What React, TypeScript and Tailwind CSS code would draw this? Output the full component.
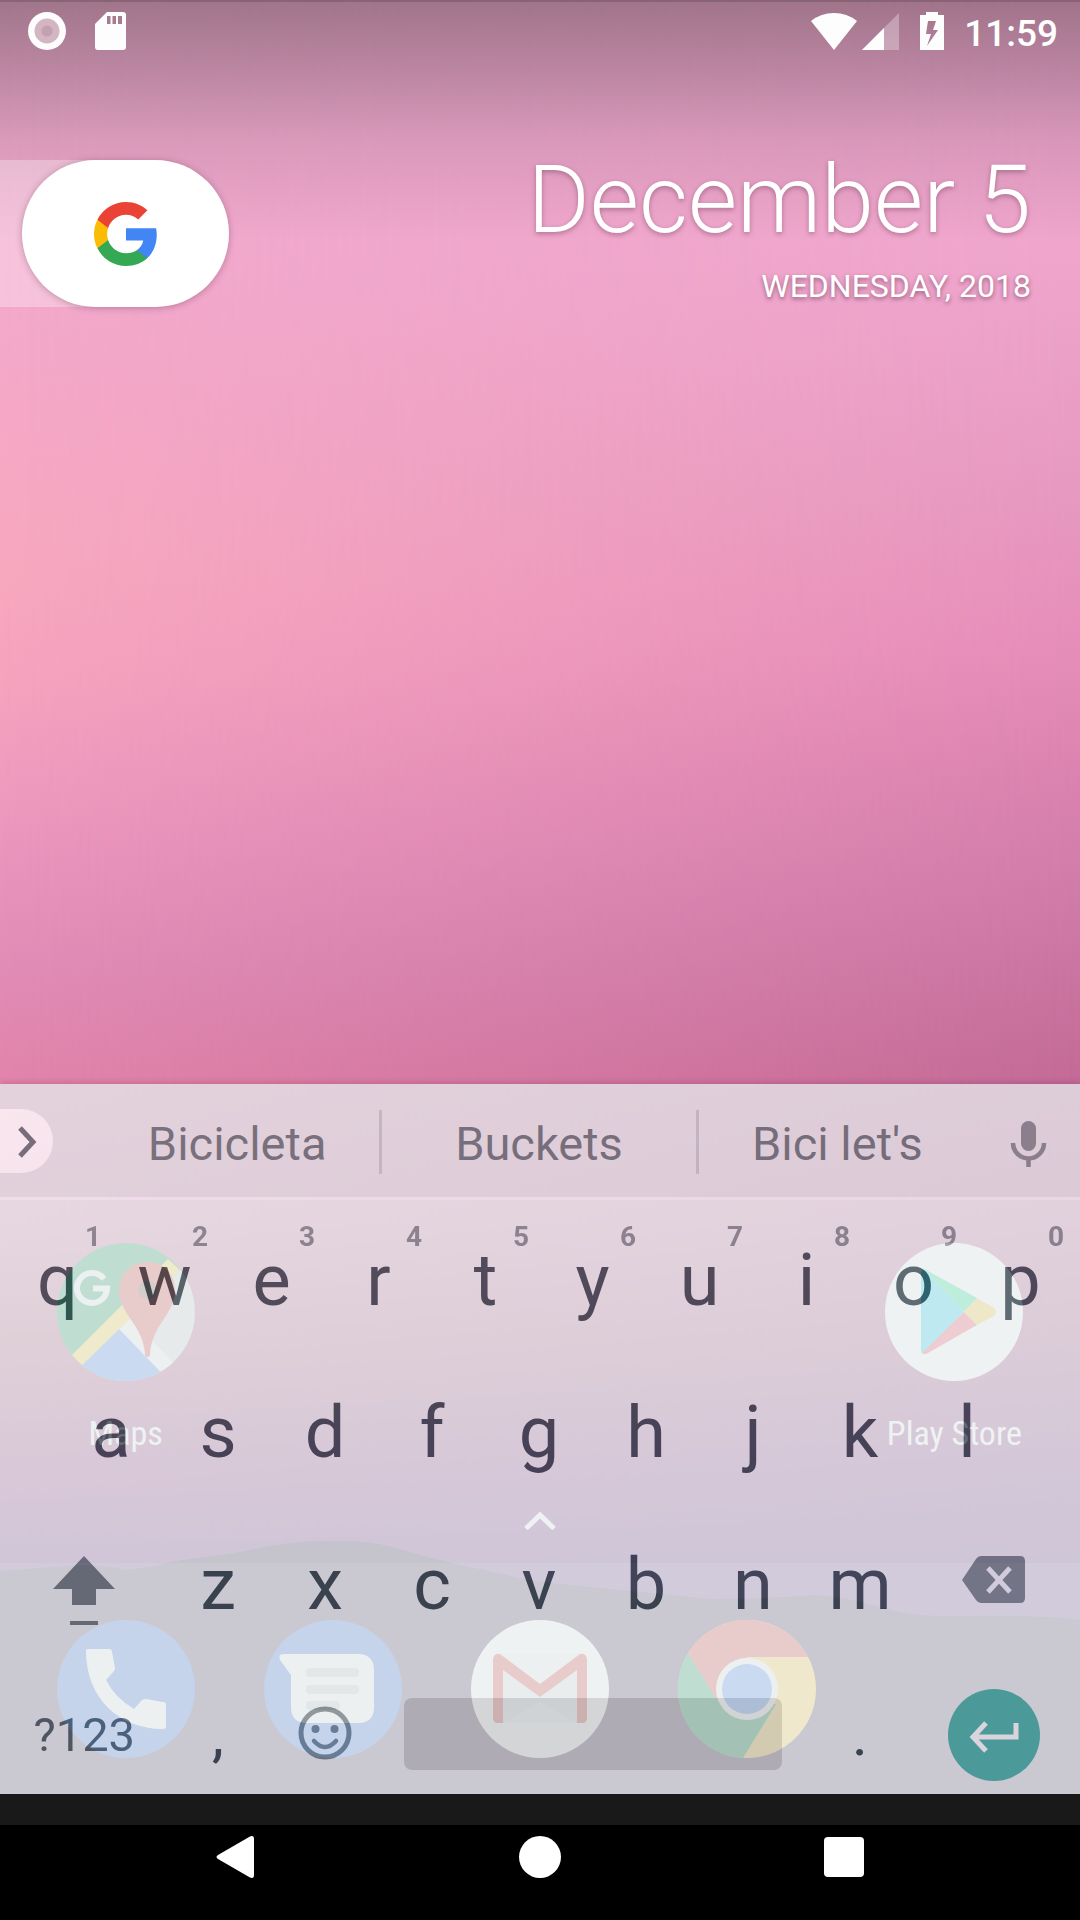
import type { ReactNode } from "react";

const ROW_ONE = ["q", "w", "e", "r", "t", "y", "u", "i", "o", "p"];
const ROW_TWO = ["a", "s", "d", "f", "g", "h", "j", "k", "l"];
const ROW_THREE = ["z", "x", "c", "v", "b", "n", "m"];

function Wallpaper() {
  return (
    <div aria-hidden="true" className="absolute inset-0">
      <div className="absolute inset-0 bg-[linear-gradient(180deg,#f0aace_0%,#f2a9cc_16%,#f5a8c6_22%,#f7a8bf_32%,#f5a3be_38%,#ec97be_46%,#e18cb6_54%,#e284ab_60.4%,#d278a0_68%,#af5578_75%,#8c2d78_83%,#5a2378_88%,#4b2864_100%)]" />
      <div className="absolute inset-0 bg-[linear-gradient(180deg,#efa6cc_0%,#efa5cc_14%,#eba0c8_20%,#e698c0_28%,#e68dba_36%,#dd84b1_42%,#cf7ba8_50%,#c36a96_60.4%,#b95a8c_68%,#9a4078_75%,#6e2878_83%,#5a2378_88%,#4b2864_100%)] [mask-image:linear-gradient(90deg,transparent,black)]" />
      <div className="absolute inset-x-0 top-0 h-[240px] bg-[linear-gradient(180deg,rgba(50,45,45,0.42),rgba(55,48,55,0.29)_28%,rgba(60,50,60,0.13)_58%,transparent)]" />
      <div className="absolute inset-x-0 top-0 h-[2px] bg-black/15" />
      <svg className="absolute inset-x-0 bottom-0 h-[260px] w-full" viewBox="0 0 1080 260" preserveAspectRatio="none">
        <path
          fill="#2d143c"
          d="M0 37 L80 31 Q105 31 125 36 Q150 34 170 28 L240 18 Q290 7 320 7 H355 Q380 8 420 21 Q470 34 500 39 Q530 48 560 50 Q650 59 710 65 Q770 65 815 61 Q850 64 880 73 Q910 82 940 82 H1000 Q1050 82 1080 86 V260 H0 Z"
        />
      </svg>
    </div>
  );
}

function StatusBar() {
  return (
    <header className="relative flex h-[66px] items-center justify-between pr-[22px] pl-[27px] text-white">
      <div className="flex items-center gap-7 pb-1">
        <svg className="h-10 w-10" viewBox="0 0 40 40">
          <circle cx="20" cy="20" r="19" fill="#fdfdfd" />
          <circle cx="20" cy="20" r="12.5" fill="#d4b6c3" />
          <circle cx="20" cy="20" r="5.6" fill="#c4a0b0" />
        </svg>
        <svg className="h-10 w-8" viewBox="0 0 32 40">
          <path fill="#fdfdfd" d="M12 1H28Q31 1 31 4V36Q31 39 28 39H3Q0 39 0 36V13Z" />
          <path fill="#a97b8f" d="M12 5H15.500V13H12ZM17.500 5H21V13H17.500ZM23 5H27V13H23Z" />
        </svg>
      </div>
      <div className="flex items-center">
        <div className="flex items-center pb-1">
          <svg className="h-[38px] w-12" viewBox="0 0 48 38">
            <path fill="#fdfdfd" d="M24 38L1 9Q11 1 24 1T47 9Z" />
          </svg>
          <svg className="ml-1 h-[38px] w-[38px]" viewBox="0 0 38 38">
            <path fill="#fff" fillOpacity=".3" d="M37 1V38H0Z" />
            <path fill="#fdfdfd" d="M22 16V38H0Z" />
          </svg>
          <svg className="ml-5 h-[38px] w-6" viewBox="0 0 24 38">
            <path fill="#fdfdfd" fillRule="evenodd" d="M6 0H18V3H24V38H0V3H6ZM8 9L6 22H11L7 34L18 18H13L16 9Z" />
          </svg>
        </div>
        <time className="ml-5 pt-[2px] text-[37px] leading-10 font-medium">11:59</time>
      </div>
    </header>
  );
}

function GoogleMark() {
  return (
    <svg className="h-16 w-16" viewBox="0 0 18 18">
      <path fill="#4285F4" d="M17.64 9.2c0-.637-.057-1.251-.164-1.84H9v3.481h4.844c-.209 1.125-.843 2.078-1.796 2.717v2.258h2.908c1.702-1.567 2.684-3.874 2.684-6.615z" />
      <path fill="#34A853" d="M9 18c2.43 0 4.467-.806 5.956-2.18l-2.908-2.259c-.806.54-1.837.86-3.048.86-2.344 0-4.328-1.584-5.036-3.711H.957v2.332A8.997 8.997 0 0 0 9 18z" />
      <path fill="#FBBC05" d="M3.964 10.71A5.41 5.41 0 0 1 3.682 9c0-.593.102-1.17.282-1.71V4.958H.957A8.996 8.996 0 0 0 0 9c0 1.452.348 2.827.957 4.042l3.007-2.332z" />
      <path fill="#EA4335" d="M9 3.58c1.321 0 2.508.454 3.44 1.345l2.582-2.58C13.463.891 11.426 0 9 0A8.997 8.997 0 0 0 .957 4.958L3.964 7.29C4.672 5.163 6.656 3.58 9 3.58z" />
    </svg>
  );
}

function Widgets() {
  return (
    <section className="relative mt-[94px] flex items-start justify-between">
      <div className="flex h-[147px] bg-[linear-gradient(90deg,rgba(255,255,255,0.3),rgba(255,255,255,0.3)_90px,transparent_90px)] pl-[22px]">
        <button
          aria-label="Google search"
          className="flex w-[207px] items-center justify-center rounded-[74px] bg-white shadow-[0_1px_7px_rgba(60,20,40,0.3)]"
        >
          <GoogleMark />
        </button>
      </div>
      <div className="pr-[49px] text-right text-white">
        <h1 className="text-[95px] leading-20 font-light [text-shadow:0_2px_5px_rgba(60,20,40,0.35)]">December 5</h1>
        <p className="mt-[22px] text-[32px] leading-12 [text-shadow:0_2px_4px_rgba(60,20,40,0.5)]">WEDNESDAY, 2018</p>
      </div>
    </section>
  );
}

function MapsIcon() {
  return (
    <svg className="h-[138px] w-[138px]" viewBox="0 0 138 138">
      <defs>
        <clipPath id="maps-disc">
          <circle cx="69" cy="69" r="69" />
        </clipPath>
      </defs>
      <g clipPath="url(#maps-disc)">
        <path fill="#0f9d58" d="M0 0H138V138H0Z" />
        <path fill="#cfd4d6" d="M123 27L25 122V138H138V12Z" />
        <path fill="#f5f5f5" d="M62 86L73 75L120 123L109 134Z" />
        <path fill="#4285f4" d="M62 86L112 138H9Z" />
        <path fill="#ffd53a" d="M111 16L123 27L20 127L8 119Z" />
        <path fill="#db4437" d="M90.500 19C74 19 62 31 62 48C62 70 86 82 88 111Q88 114 90.500 114Q93 114 93 111C95 82 118 70 118 48C118 31 107 19 90.500 19Z" />
        <circle cx="90.500" cy="47" r="9.500" fill="#7b4a3a" />
        <path d="M47 36A15 15 0 1 0 50 45.500H36" fill="none" stroke="#f4f4f4" strokeWidth="6" />
      </g>
    </svg>
  );
}

function PlayIcon() {
  return (
    <svg className="h-[138px] w-[138px]" viewBox="0 0 138 138">
      <circle cx="69" cy="69" r="69" fill="#fff" />
      <path fill="#12d0f0" d="M36 30Q36 26 40 27L79 69L40 111Q36 111 36 107Z" />
      <path fill="#10e58c" d="M39 26Q41 26 43 28L92 55L79 69Z" />
      <path fill="#f8cc30" d="M92 55L109 65Q113 69 109 73L92 82L79 69Z" />
      <path fill="#f5495b" d="M79 69L92 82L43 110Q40 112 37 110Z" />
    </svg>
  );
}

function PhoneIcon() {
  return (
    <svg className="h-[138px] w-[138px]" viewBox="0 0 138 138">
      <circle cx="69" cy="69" r="69" fill="#3069d6" />
      <path fill="#f5f5f5" d="M31 29H52Q55 29 55 32L58 48Q58 50 57 51L49 60Q58 78 77 89L85 80Q87 79 89 79L106 82Q109 82 109 85V106Q109 109 106 109C62 109 29 78 29 31Q29 29 31 29Z" />
    </svg>
  );
}

function MessagesIcon() {
  return (
    <svg className="h-[138px] w-[138px]" viewBox="0 0 138 138">
      <circle cx="69" cy="69" r="69" fill="#3069d6" />
      <path fill="#f5f5f5" d="M19 34H94Q110 34 110 51V87Q110 103 94 103H43Q27 103 27 87V55L16 40Q14 34 19 34Z" />
      <g fill="#c4c6c7">
        <rect x="42" y="48" width="53" height="9" rx="4" />
        <rect x="42" y="65" width="53" height="9" rx="4" />
        <rect x="42" y="81" width="34" height="9" rx="4" />
      </g>
    </svg>
  );
}

function GmailIcon() {
  return (
    <svg className="h-[138px] w-[138px]" viewBox="0 0 138 138">
      <circle cx="69" cy="69" r="69" fill="#fff" />
      <path fill="#f0f2f3" d="M28 34H110V103H28Z" />
      <path fill="#e2e5e7" d="M32 50L69 76L106 50V103L69 82L32 103Z" />
      <path fill="#db4437" d="M22 39Q23 33 29 34L69 64L109 34Q115 33 116 39V98Q116 103 111 103H106V50L69 77L32 50V103H27Q22 103 22 98Z" />
    </svg>
  );
}

function ChromeIcon() {
  return (
    <svg className="h-[138px] w-[138px]" viewBox="0 0 138 138">
      <circle cx="69" cy="69" r="69" fill="#ffcd40" />
      <path fill="#db4437" d="M10 33A69 69 0 0 1 130 37H69L39 84Z" />
      <path fill="#0f9d58" d="M10 33A69 69 0 0 0 65 138L98 84L39 80Z" />
      <circle cx="69" cy="69" r="31" fill="#f5f5f5" />
      <circle cx="69" cy="69" r="25" fill="#4285f4" />
    </svg>
  );
}

function AppButton({ name, label, children }: { name: string; label?: boolean; children: ReactNode }) {
  return (
    <button aria-label={name} className="flex flex-col items-center gap-8">
      {children}
      {label && (
        <span className="font-['Roboto_Condensed','Roboto',sans-serif] text-[34px] leading-10 whitespace-nowrap text-white">{name}</span>
      )}
    </button>
  );
}

function Launcher() {
  return (
    <section className="relative mt-auto">
      <div className="grid grid-cols-5 px-[22px]">
        <AppButton name="Maps" label>
          <MapsIcon />
        </AppButton>
        <div className="col-start-5 grid">
          <AppButton name="Play Store" label>
            <PlayIcon />
          </AppButton>
        </div>
      </div>
      <button aria-label="All apps" className="flex w-full justify-center pt-[58px] pb-8">
        <svg className="h-5 w-9" viewBox="0 0 36 20">
          <path d="M4 17.500L18 4L32 17.500" fill="none" stroke="#fff" strokeWidth="5" />
        </svg>
      </button>
      <div className="grid grid-cols-5 bg-white/12 px-[22px] pt-[57px] pb-9">
        <AppButton name="Phone">
          <PhoneIcon />
        </AppButton>
        <AppButton name="Messages">
          <MessagesIcon />
        </AppButton>
        <AppButton name="Gmail">
          <GmailIcon />
        </AppButton>
        <AppButton name="Chrome">
          <ChromeIcon />
        </AppButton>
      </div>
    </section>
  );
}

function LetterKey({ letter, hint }: { letter: string; hint?: string }) {
  return (
    <button className="relative col-span-2 flex h-[152px] items-center justify-center pt-1 text-7xl leading-20">
      {letter}
      {hint && <span className="absolute top-4 right-[10px] text-[28px] leading-9 font-bold opacity-60">{hint}</span>}
    </button>
  );
}

function Suggestions() {
  return (
    <div className="flex h-[113px] items-center bg-[#e4e7e9] text-[47px] leading-14 text-[#37474f]/75">
      <div className="w-[95px]">
        <button aria-label="More options" className="flex h-16 w-[53px] items-center justify-center rounded-r-full bg-white pt-[2px]">
          <svg className="h-8 w-6" viewBox="0 0 24 32">
            <path d="M5 2L18 16L5 30" fill="none" stroke="#5f6a70" strokeWidth="5" />
          </svg>
        </button>
      </div>
      <button className="flex-[284] pt-[6px]">Bicicleta</button>
      <div className="mt-[2px] h-16 w-[3px] bg-[#37474f]/20" />
      <button className="flex-[313] pt-[6px]">Buckets</button>
      <div className="mt-[2px] h-16 w-[3px] bg-[#37474f]/20" />
      <button className="flex-[277] pt-[6px]">Bici let's</button>
      <button aria-label="Voice typing" className="flex w-[104px] justify-center pt-[6px]">
        <svg className="h-12 w-10" viewBox="0 0 40 48">
          <rect x="13" y="1" width="15" height="30" rx="7.500" fill="#7d868b" />
          <path d="M5 23A15.500 15.500 0 0 0 36 23M20.500 38V47" fill="none" stroke="#7d868b" strokeWidth="4.500" />
        </svg>
      </button>
    </div>
  );
}

function Keyboard() {
  return (
    <section
      aria-label="Keyboard"
      className="absolute inset-x-0 bottom-0 bg-[#eceff1] text-[#37474f] opacity-80 shadow-[0_-1px_6px_rgba(80,20,50,0.25)]"
    >
      <Suggestions />
      <div className="h-[3px] bg-[#f5f8fa]" />
      <div className="pt-[3px] pr-[6px] pl-1">
        <div className="grid grid-cols-[repeat(20,minmax(0,1fr))]">
          {ROW_ONE.map((letter, i) => (
            <LetterKey key={letter} letter={letter} hint={String((i + 1) % 10)} />
          ))}
        </div>
        <div className="grid grid-cols-[repeat(20,minmax(0,1fr))]">
          <span />
          {ROW_TWO.map((letter) => (
            <LetterKey key={letter} letter={letter} />
          ))}
        </div>
        <div className="grid grid-cols-[repeat(20,minmax(0,1fr))]">
          <button aria-label="Shift" className="col-span-3 flex items-center justify-center pt-4">
            <svg className="h-[70px] w-16" viewBox="0 0 64 70">
              <path fill="#37474f" fillOpacity=".7" d="M32 0L63 33H44V49H20V33H1ZM18 65H46V69H18Z" />
            </svg>
          </button>
          {ROW_THREE.map((letter) => (
            <LetterKey key={letter} letter={letter} />
          ))}
          <button aria-label="Delete" className="col-span-3 flex items-center justify-center pb-[6px]">
            <svg className="h-12 w-16" viewBox="0 0 64 48">
              <path fill="#37474f" fillOpacity=".65" d="M19 0H58Q63 0 63 5V42Q63 47 58 47H19Q16 47 14 44L0 24L14 3Q16 0 19 0Z" />
              <path d="M26 12L48 36M48 12L26 36" fill="none" stroke="#eceff1" strokeWidth="5" />
            </svg>
          </button>
        </div>
        <div className="grid h-[135px] grid-cols-[repeat(20,minmax(0,1fr))] pt-[17px]">
          <button className="col-span-3 text-[47px] leading-14 text-[#37474f]/85">?123</button>
          <button className="col-span-2 text-6xl leading-16">,</button>
          <button aria-label="Emoji" className="col-span-2 flex items-center justify-center pb-1">
            <svg className="h-[54px] w-[54px]" viewBox="0 0 54 54">
              <circle cx="27" cy="27" r="24" fill="none" stroke="#37474f" strokeOpacity=".65" strokeWidth="5" />
              <path d="M16 35Q27 47 38 35" fill="none" stroke="#37474f" strokeOpacity=".65" strokeWidth="4.500" strokeLinecap="round" />
              <circle cx="17.500" cy="23" r="4" fill="#37474f" fillOpacity=".65" />
              <circle cx="36.500" cy="23" r="4" fill="#37474f" fillOpacity=".65" />
            </svg>
          </button>
          <div className="col-span-8 flex items-center px-[25px] pb-[2px]">
            <button aria-label="Space" className="h-[72px] w-full rounded-lg bg-black/15" />
          </div>
          <button className="col-span-2 text-6xl leading-16">.</button>
          <div className="col-span-3 flex items-center justify-center">
            <button aria-label="Enter" className="flex h-[92px] w-[92px] items-center justify-center rounded-full bg-[#4db6ac]">
              <svg className="mt-1 h-9 w-[50px]" viewBox="0 0 50 36">
                <path d="M47 4V18H5M17 4L4 18L17 32" fill="none" stroke="#fff" strokeWidth="5" />
              </svg>
            </button>
          </div>
        </div>
      </div>
    </section>
  );
}

function NavigationBar() {
  return (
    <nav className="flex h-[126px] items-center justify-center gap-[262px] bg-[linear-gradient(180deg,#191919_31px,#000_31px)]">
      <button aria-label="Back">
        <svg className="h-[42px] w-[42px]" viewBox="0 0 42 42">
          <path fill="#fff" d="M35 .500Q39 -1 39 3V39Q39 43 35 41.500L3 23Q0 21 3 19Z" />
        </svg>
      </button>
      <button aria-label="Home" className="h-[42px] w-[42px] rounded-full bg-white" />
      <button aria-label="Recent apps" className="flex h-[42px] w-[42px] items-center justify-center">
        <span className="h-10 w-10 rounded-sm bg-white" />
      </button>
    </nav>
  );
}

export default function App() {
  return (
    <div className="flex min-h-screen flex-col bg-black font-['Roboto',sans-serif]">
      <main className="relative flex flex-1 flex-col overflow-hidden">
        <Wallpaper />
        <StatusBar />
        <Widgets />
        <Launcher />
        <Keyboard />
      </main>
      <NavigationBar />
    </div>
  );
}
